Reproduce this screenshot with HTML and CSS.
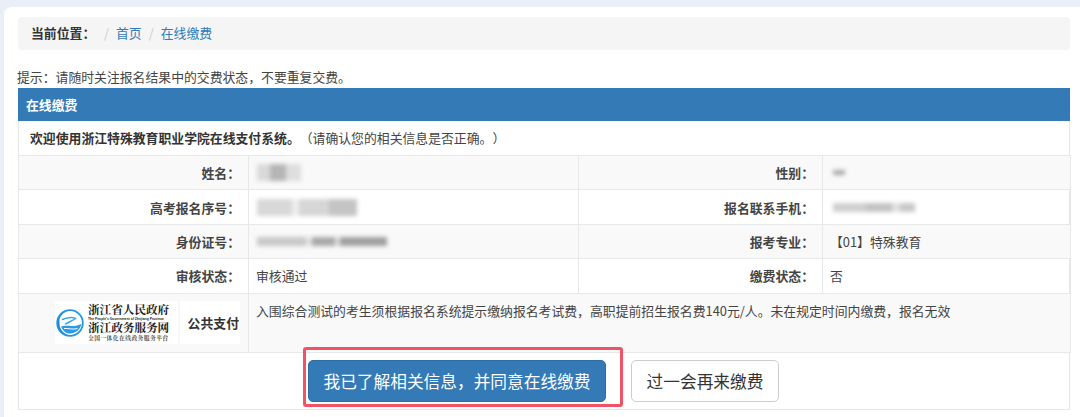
FILE: index.html
```html
<!DOCTYPE html>
<html lang="zh-CN">
<head>
<meta charset="utf-8">
<title>在线缴费</title>
<link rel="stylesheet" href="styles.css">
</head>
<body>
<main class="card">
  <nav class="crumb">
    <strong class="crumb-label">当前位置：</strong>
    <span class="sep">/</span><a href="#">首页</a>
    <span class="sep">/</span><a href="#">在线缴费</a>
  </nav>
  <p class="hint">提示：请随时关注报名结果中的交费状态，不要重复交费。</p>
  <section class="panel">
    <h2 class="panel-head">在线缴费</h2>
    <div class="welcome"><b>欢迎使用浙江特殊教育职业学院在线支付系统。</b>（请确认您的相关信息是否正确。）</div>
    <table class="info">
      <colgroup><col class="c1"><col class="c2"><col class="c3"><col class="c4"></colgroup>
      <tr class="odd">
        <th>姓名：</th><td><span class="blur b-name"></span></td>
        <th>性别：</th><td><span class="blur b-sex"></span></td>
      </tr>
      <tr>
        <th>高考报名序号：</th><td><span class="blur b-seq"></span></td>
        <th>报名联系手机：</th><td><span class="blur b-phone"></span></td>
      </tr>
      <tr class="odd">
        <th>身份证号：</th><td><span class="blur b-id"></span></td>
        <th>报考专业：</th><td>【01】特殊教育</td>
      </tr>
      <tr>
        <th>审核状态：</th><td>审核通过</td>
        <th>缴费状态：</th><td>否</td>
      </tr>
      <tr class="odd pay">
        <th>
          <div class="pay-brand">
            <div class="logo">
              <svg class="logo-mark" viewBox="0 0 30 30" aria-hidden="true">
                <circle cx="15" cy="15" r="12.8" fill="none" stroke="#2196e3" stroke-width="1.8"/>
                <path d="M2.500 15A12.500 12.500 0 0 1 15 2.500A13 11 0 0 0 4.500 15A12 12 0 0 0 15 27.500A12.500 12.500 0 0 1 2.500 15Z" fill="#1a86d8"/>
                <path d="M7.500 11.500C11 9.500 17 9 20.500 10.500C17.500 13 13.500 14 10.500 16" fill="none" stroke="#3aa3ea" stroke-width="1.500" stroke-linecap="round"/>
                <path d="M6 18.500C11 16.500 17 20 26.500 16C25 22 20 26 14 25.500C10 25 7.500 22 6 18.500Z" fill="#2a9be8"/>
                <path d="M9 20.500C13 20 18 22 22.500 20.500" fill="none" stroke="#fff" stroke-width="1"/>
              </svg>
              <div class="logo-text">
                <span class="lt-big">浙江省人民政府</span>
                <span class="lt-en">The People's Government of Zhejiang Province</span>
                <span class="lt-big">浙江政务服务网</span>
                <span class="lt-small">全国一体化在线政务服务平台</span>
              </div>
            </div>
            <span class="pay-name">公共支付</span>
          </div>
        </th>
        <td colspan="3" class="pay-note">入围综合测试的考生须根据报名系统提示缴纳报名考试费，高职提前招生报名费140元/人。未在规定时间内缴费，报名无效</td>
      </tr>
    </table>
    <div class="actions">
      <span class="marked"><button class="btn primary" type="button">我已了解相关信息，并同意在线缴费</button></span>
      <button class="btn plain" type="button">过一会再来缴费</button>
    </div>
  </section>
</main>
</body>
</html>
```
FILE: styles.css
```css
* { box-sizing: border-box; }
html, body { margin: 0; height: 417px; overflow: hidden; }
body {
  background: #e8eff7;
  padding: 7px 0 0 4px;
  font-family: "Noto Sans CJK SC", "Noto Sans", sans-serif;
  font-size: 12.85px;
  color: #333;
  text-spacing-trim: space-all;
}
.card {
  background: #fff;
  border-radius: 8px 0 0 0;
  height: 410px;
  padding: 10px 10px 0 14px;
}
.crumb {
  height: 33px;
  background: #f5f5f5;
  border-radius: 4px;
  display: flex;
  align-items: center;
  padding-left: 13px;
  line-height: 1;
}
.crumb-label { font-weight: 700; width: 73px; }
.crumb a { color: #337ab7; text-decoration: none; }
.sep { color: #ccc; width: 12px; }
.crumb a + .sep { margin-left: 7px; }
.hint { margin: 18px 0 2px -1px; height: 18px; line-height: 18px; color: #444; }
.panel { border: 1px solid #e4e7ea; border-top: 0; height: 322px; }
.panel-head {
  margin: 0 -1px;
  height: 33px;
  line-height: 33px;
  padding-left: 8px;
  background: #337ab7;
  color: #fff;
  font-size: 12.85px;
  font-weight: 700;
}
.welcome {
  height: 34px;
  line-height: 34px;
  padding-left: 11px;
  color: #444;
}
.welcome b { color: #333; }
.info { width: 1052px; margin-left: -1px; border-collapse: collapse; table-layout: fixed; }
.c1 { width: 230px; } .c2 { width: 330px; } .c3 { width: 244px; } .c4 { width: 248px; }
.info tr { height: 34.4px; }
.info th, .info td { border: 1px solid #e6e8ea; padding: 0 7px; font-size: 12.85px; }
.info th { text-align: right; padding-right: 8px; font-weight: 700; color: #444; }
.info td { text-align: left; color: #444; }
.odd { background: #f9f9f9; }
.blur { display: block; filter: blur(2px); }
.b-name {
  width: 44px; height: 17px; margin-left: 1px;
  background: linear-gradient(90deg, #d9d9d9 0 30%, #b5b5b5 30% 65%, #dedede 65% 100%);
}
.b-sex { width: 12px; height: 5px; background: #a8a8a8; margin-left: 3px; }
.b-seq {
  width: 100px; height: 17px; margin-left: 1px;
  background: linear-gradient(90deg, #d8d8d8 0 35%, #eee 35% 42%, #d6d6d6 42% 72%, #c4c4c4 72% 100%);
}
.b-phone {
  width: 82px; height: 9px; margin-left: 3px;
  background: linear-gradient(90deg, #cfcfcf 0 40%, #c2c2c2 40% 72%, #e0e0e0 72% 82%, #c8c8c8 82% 100%);
}
.b-id {
  width: 130px; height: 9px; margin-left: 1px;
  background: linear-gradient(90deg, #c8c8c8 0 38%, #e2e2e2 38% 42%, #a8a8a8 42% 60%, #dcdcdc 60% 64%, #a0a0a0 64% 100%);
}
.pay { height: 59px !important; }
.pay th { padding: 0 8px 0 0; }
.pay-brand { display: flex; justify-content: flex-end; align-items: center; gap: 2px; }
.logo {
  width: 123px; height: 43px; background: #fff;
  display: flex; align-items: center;
}
.logo-mark { width: 30px; height: 30px; flex: none; }
.logo-text {
  display: flex; flex-direction: column; align-items: flex-start;
  margin-left: 3px; font-family: "Noto Serif CJK SC", "Noto Sans CJK SC", serif; color: #222; line-height: 1;
}
.lt-big { font-size: 11.6px; font-weight: 700; height: 13px; white-space: nowrap; }
.lt-en { font-size: 3.4px; height: 5px; line-height: 5px; font-weight: 700; font-family: "Liberation Sans", sans-serif; white-space: nowrap; }
.lt-small { font-size: 5.8px; height: 7px; letter-spacing: .4px; font-weight: 700; color: #555; white-space: nowrap; }
.pay-name {
  width: 60px; height: 43px; line-height: 43px; background: #fff; text-align: right; padding-right: 1px;
  font-size: 12.85px; color: #333;
}
.pay-note { vertical-align: top; padding-top: 8px !important; line-height: 18px; }
.actions { display: flex; align-items: flex-start; gap: 25px; height: 58px; padding: 7px 0 0 289px; }
.marked { position: relative; display: block; }
.marked::after {
  content: "";
  position: absolute;
  left: -5px; top: -13px; right: -17px; bottom: -5px;
  border: 3px solid #f25265;
  border-radius: 3px;
  pointer-events: none;
}
.btn {
  display: block;
  height: 42px;
  border-radius: 5px;
  font: inherit;
  font-size: 16.7px;
  padding: 0;
}
.primary { width: 298px; background: #337ab7; border: 1px solid #2e6da4; color: #fff; }
.plain { width: 148px; background: #fff; border: 1px solid #ccc; color: #333; }
```
